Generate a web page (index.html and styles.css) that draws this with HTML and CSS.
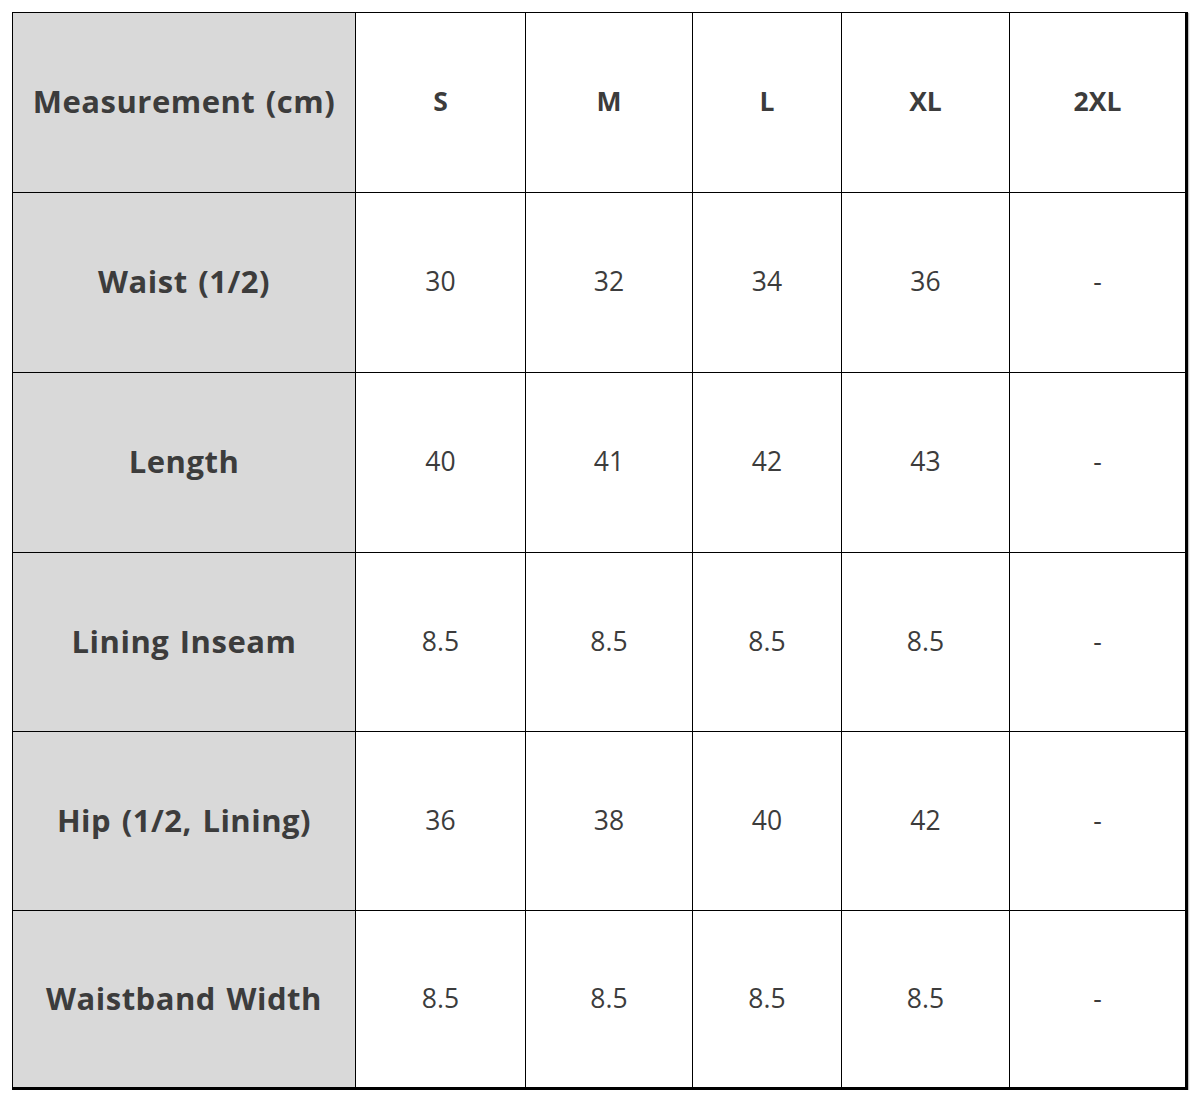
FILE: index.html
```
<!DOCTYPE html>
<html>
<head>
<meta charset="utf-8">
<link rel="stylesheet" href="styles.css">
</head>
<body>
<div class="chart">
  <div class="cell label">Measurement (cm)</div>
  <div class="cell head">S</div>
  <div class="cell head">M</div>
  <div class="cell head">L</div>
  <div class="cell head">XL</div>
  <div class="cell head">2XL</div>

  <div class="cell label">Waist (1/2)</div>
  <div class="cell val">30</div>
  <div class="cell val">32</div>
  <div class="cell val">34</div>
  <div class="cell val">36</div>
  <div class="cell val">-</div>

  <div class="cell label">Length</div>
  <div class="cell val">40</div>
  <div class="cell val">41</div>
  <div class="cell val">42</div>
  <div class="cell val">43</div>
  <div class="cell val">-</div>

  <div class="cell label">Lining Inseam</div>
  <div class="cell val">8.5</div>
  <div class="cell val">8.5</div>
  <div class="cell val">8.5</div>
  <div class="cell val">8.5</div>
  <div class="cell val">-</div>

  <div class="cell label">Hip (1/2, Lining)</div>
  <div class="cell val">36</div>
  <div class="cell val">38</div>
  <div class="cell val">40</div>
  <div class="cell val">42</div>
  <div class="cell val">-</div>

  <div class="cell label">Waistband Width</div>
  <div class="cell val">8.5</div>
  <div class="cell val">8.5</div>
  <div class="cell val">8.5</div>
  <div class="cell val">8.5</div>
  <div class="cell val">-</div>
</div>
</body>
</html>
```
FILE: styles.css
```
html, body {
  margin: 0;
  padding: 0;
  background: #ffffff;
}
body {
  padding: 12px 0 0 12px;
  font-family: "Open Sans", "Noto Sans", sans-serif;
  color: #3c3c3c;
}
.chart {
  display: grid;
  grid-template-columns: 342px 169px 166px 148px 167px 175px;
  grid-template-rows: 179px 179px 179px 178px 178px 176px;
  gap: 1px;
  background: #000000;
  padding: 1px 3px 3px 1px;
  width: max-content;
  box-shadow: 1px 1px 1px rgba(0,0,0,0.25);
}
.cell {
  background: #ffffff;
  display: flex;
  align-items: center;
  justify-content: center;
  text-align: center;
  padding-bottom: 3px;
}
.label {
  background: #d9d9d9;
  font-weight: 700;
  font-size: 31px;
  letter-spacing: 0.5px;
  word-spacing: 2px;
}
.head {
  font-weight: 700;
  font-size: 26.5px;
}
.val {
  font-size: 26.5px;
}
```
